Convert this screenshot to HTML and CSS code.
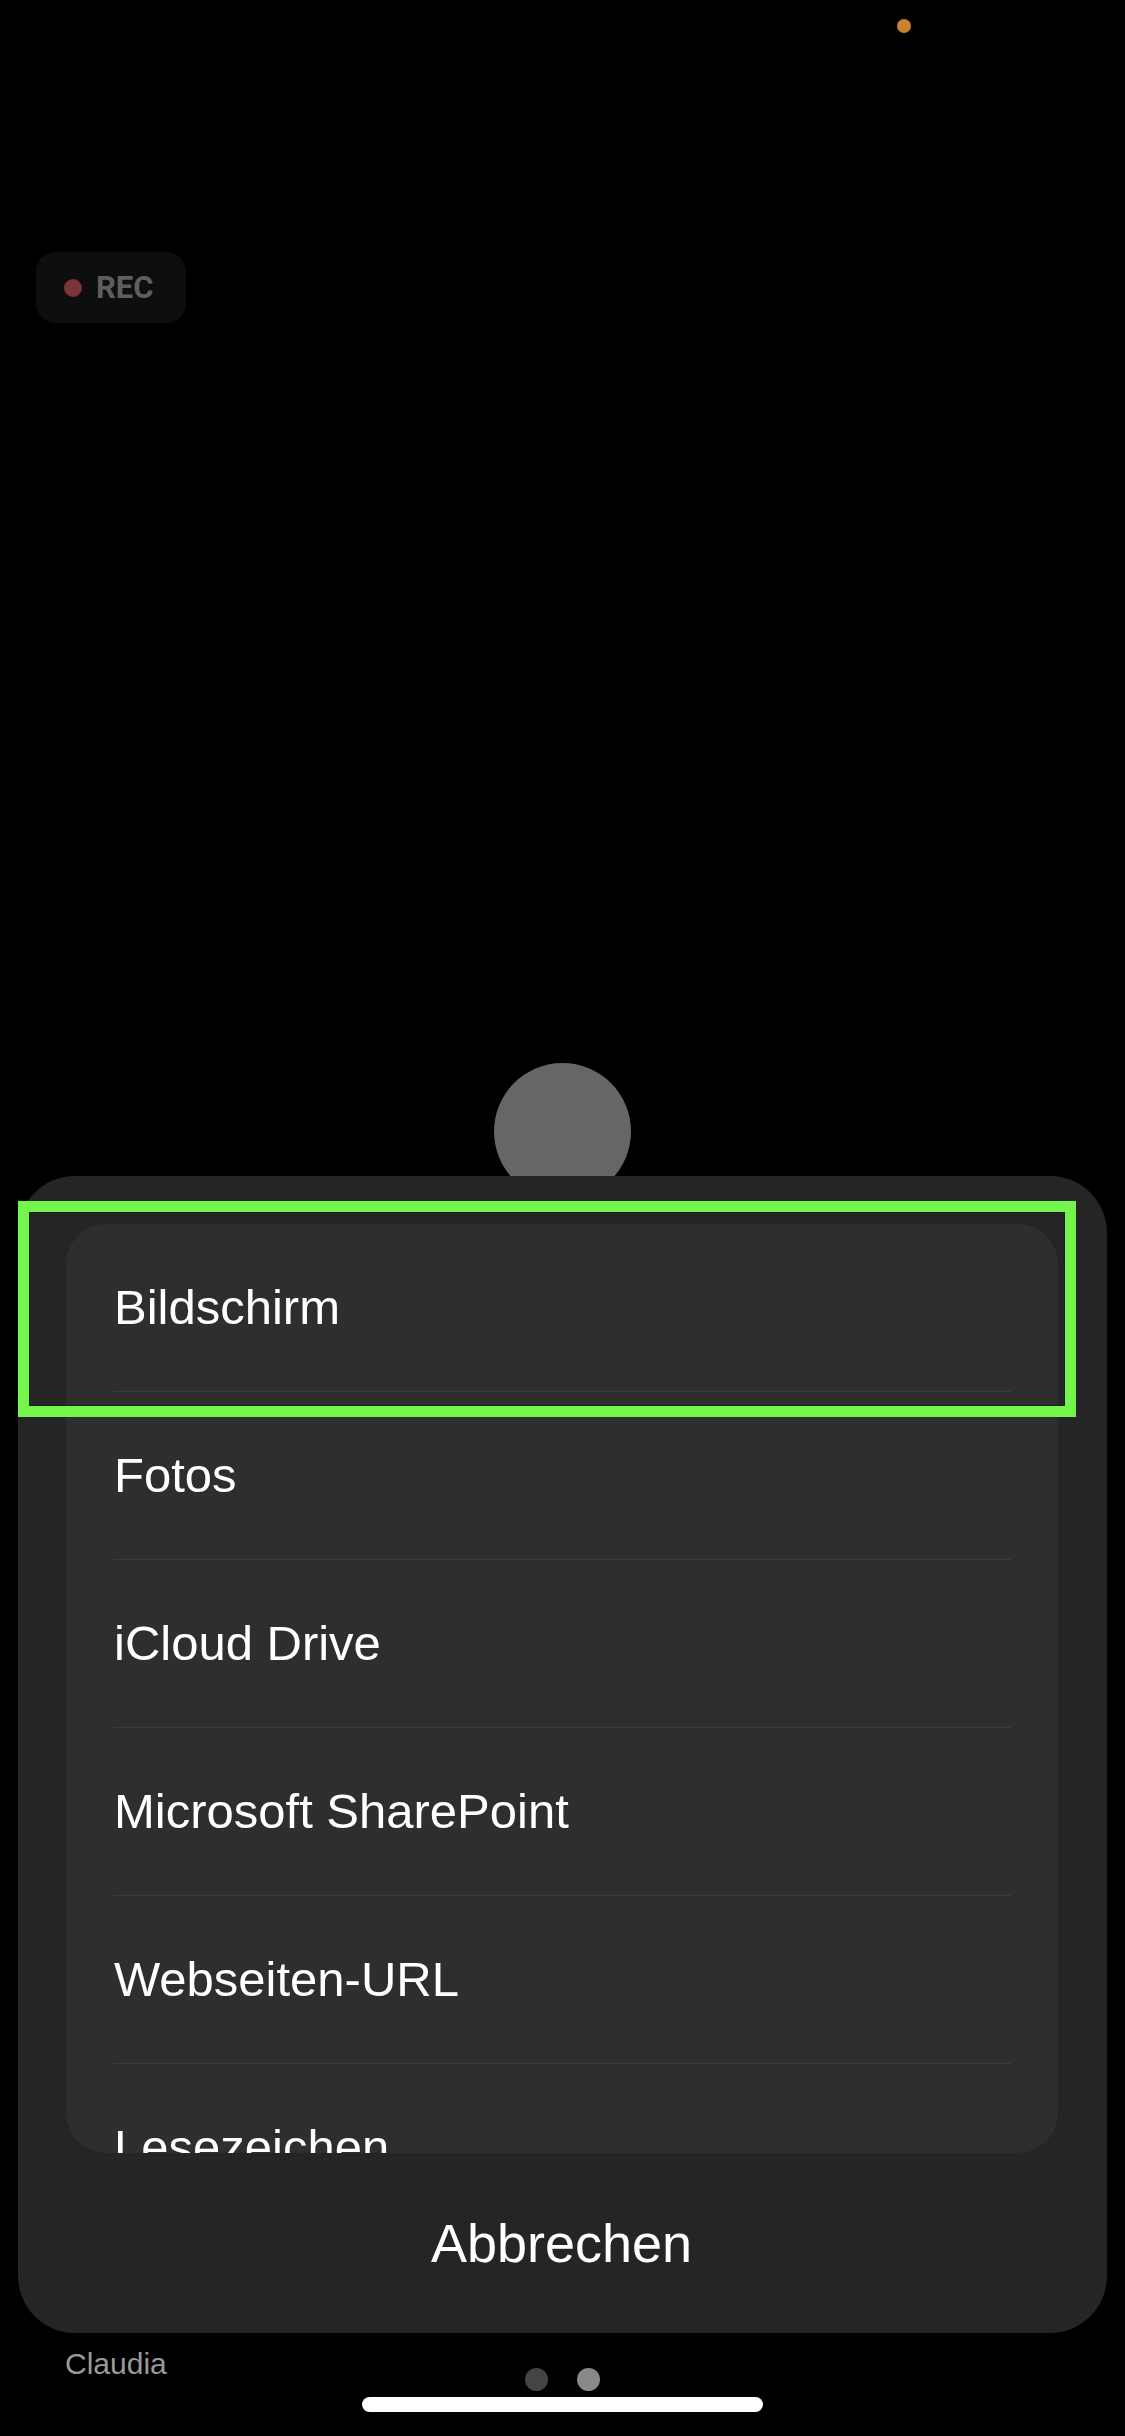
FILE: index.html
```html
<!DOCTYPE html>
<html lang="de">
<head>
<meta charset="utf-8">
<title>Freigeben</title>
<link rel="stylesheet" href="styles.css">
</head>
<body>
<div class="screen">
  <div class="status">
    <span class="privacy-dot"></span>
  </div>

  <div class="rec-badge">
    <span class="rec-dot"></span>
    <span class="rec-label">REC</span>
  </div>

  <div class="stage"></div>

  <div class="avatar"></div>

  <div class="sheet">
    <div class="options">
      <div class="option"><span class="option-label">Bildschirm</span></div>
      <div class="option"><span class="option-label">Fotos</span></div>
      <div class="option"><span class="option-label">iCloud Drive</span></div>
      <div class="option"><span class="option-label">Microsoft SharePoint</span></div>
      <div class="option"><span class="option-label">Webseiten-URL</span></div>
      <div class="option"><span class="option-label">Lesezeichen</span></div>
    </div>
    <div class="cancel">Abbrechen</div>
    <div class="focus-ring"></div>
  </div>

  <div class="footer">
    <div class="footer-row">
      <span class="participant">Claudia</span>
      <div class="pager">
        <span class="pager-dot"></span>
        <span class="pager-dot pager-dot-active"></span>
      </div>
      <span></span>
    </div>
    <div class="home-indicator"></div>
  </div>
</div>
</body>
</html>
```

FILE: styles.css
```css
html, body {
  margin: 0;
  padding: 0;
  background: #000;
}

.screen {
  width: 1125px;
  height: 2436px;
  background: #000;
  display: flex;
  flex-direction: column;
  font-family: "Liberation Sans", Arial, sans-serif;
  color: #fff;
  overflow: hidden;
}

/* status bar with the orange privacy indicator */
.status {
  display: flex;
  justify-content: flex-end;
  padding: 19px 214px 0 0;
  height: 14px;
}

.privacy-dot {
  width: 14px;
  height: 14px;
  border-radius: 50%;
  background: #c9822f;
}

/* recording badge */
.rec-badge {
  margin: 219px 0 0 36px;
  width: 150px;
  height: 71px;
  box-sizing: border-box;
  padding-left: 28px;
  border-radius: 20px;
  background: #0e0e0e;
  display: flex;
  align-items: center;
  gap: 14px;
}

.rec-dot {
  width: 18px;
  height: 18px;
  border-radius: 50%;
  background: #7c3434;
}

.rec-label {
  font-family: Roboto, "Liberation Sans", sans-serif;
  font-weight: 700;
  font-size: 31px;
  line-height: 1;
  color: #5e5e5e;
}

.stage {
  flex: 1;
}

.avatar {
  align-self: center;
  width: 137px;
  height: 137px;
  border-radius: 50%;
  background: #666;
  margin-bottom: -24px;
}

/* action sheet */
.sheet {
  position: relative;
  z-index: 1;
  margin: 0 18px;
  height: 1157px;
  box-sizing: border-box;
  padding: 48px 49px 0 48px;
  border-radius: 57px;
  background: #252525;
  display: flex;
  flex-direction: column;
}

.options {
  height: 929px;
  border-radius: 40px;
  background: #2e2e2e;
  overflow: hidden;
  flex-shrink: 0;
}

.option {
  height: 168px;
  box-sizing: border-box;
  margin: 0 47px 0 48px;
  border-bottom: 1px solid #3b3b3b;
  display: flex;
  align-items: center;
}

.option-label {
  font-size: 49px;
  line-height: 1;
  white-space: nowrap;
}

.cancel {
  height: 180px;
  display: flex;
  align-items: center;
  justify-content: center;
  font-size: 54px;
  line-height: 1;
  margin-left: -1px;
}

/* highlight frame drawn over the first option */
.focus-ring {
  position: absolute;
  left: 0;
  top: 25px;
  width: 1058px;
  height: 216px;
  box-sizing: border-box;
  border: 11px solid #74f54b;
  box-shadow: inset 0 0 0 1px rgba(0, 0, 0, 0.35);
  pointer-events: none;
}

/* bottom area: participant name, pager and home indicator */
.footer {
  height: 103px;
  display: flex;
  flex-direction: column;
}

.footer-row {
  height: 58px;
  display: grid;
  grid-template-columns: 1fr auto 1fr;
}

.participant {
  align-self: start;
  padding: 16px 0 0 65px;
  font-size: 30px;
  line-height: 1;
  color: #9a9a9a;
}

.pager {
  align-self: end;
  display: flex;
  gap: 29px;
}

.pager-dot {
  width: 23px;
  height: 23px;
  border-radius: 50%;
  background: #444;
}

.pager-dot-active {
  background: #898989;
}

.home-indicator {
  align-self: center;
  margin-top: 6px;
  width: 401px;
  height: 15px;
  border-radius: 8px;
  background: #fff;
}
```
